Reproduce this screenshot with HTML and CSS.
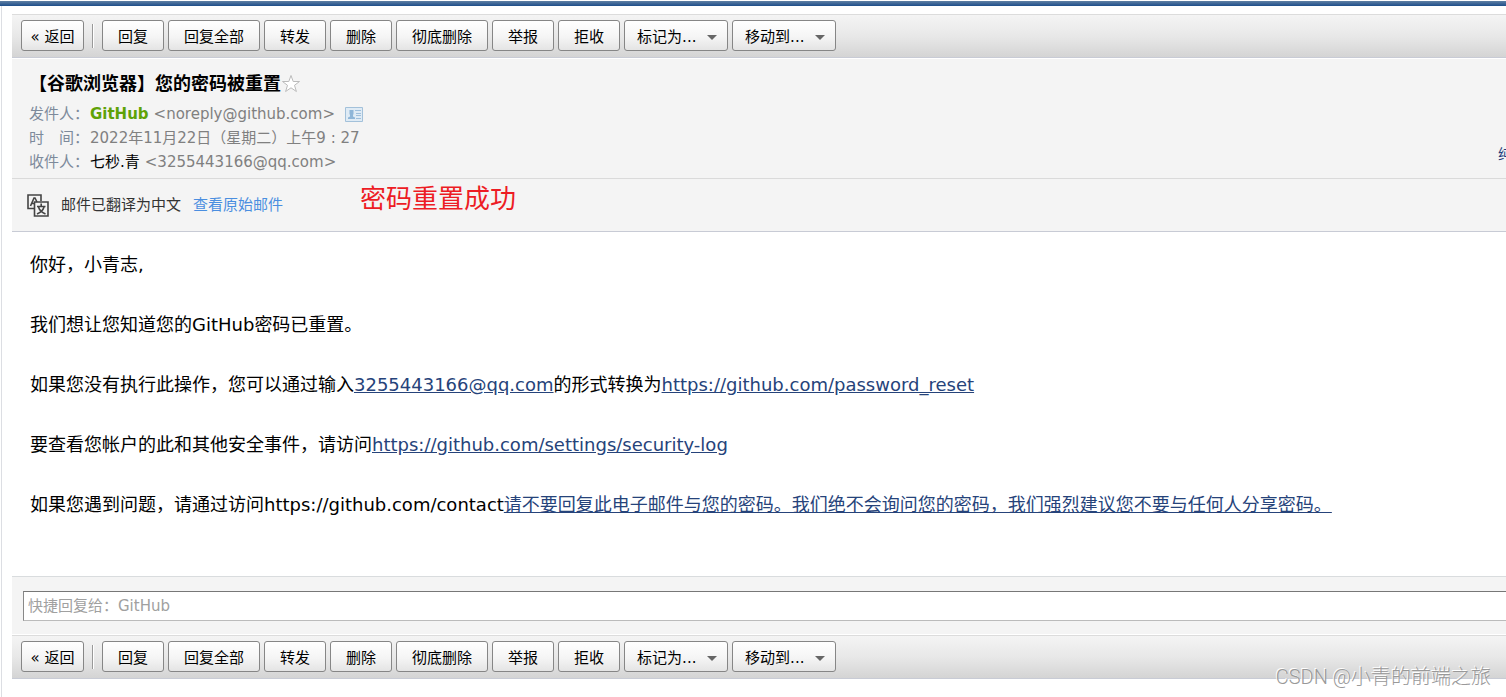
FILE: index.html
```
<!DOCTYPE html>
<html lang="zh-CN">
<head>
<meta charset="utf-8">
<title>您的密码被重置</title>
<link rel="stylesheet" href="styles.css">
</head>
<body>
<div class="topbar"></div>
<main class="mail">
  <nav class="toolbar" aria-label="邮件操作">
    <button class="btn back">« 返回</button><span class="sep"></span>
    <button class="btn">回复</button>
    <button class="btn">回复全部</button>
    <button class="btn">转发</button>
    <button class="btn">删除</button>
    <button class="btn">彻底删除</button>
    <button class="btn">举报</button>
    <button class="btn">拒收</button>
    <button class="btn menu">标记为...<span class="arrow"></span></button>
    <button class="btn menu">移动到...<span class="arrow"></span></button>
  </nav>

  <header class="head">
    <div class="info">
      <h1 class="subject">【谷歌浏览器】您的密码被重置<svg class="star" viewBox="0 0 20 20"><path d="M10 1.500l2.200 6h6.300l-5 3.800 1.900 6.200L10 13.800l-5.400 3.700 1.900-6.200-5-3.800h6.300z"/></svg></h1>
      <div class="row"><span class="label">发件人：</span><b class="sender">GitHub</b><span class="addr">&lt;noreply@github.com&gt;</span><svg class="card" viewBox="0 0 18 15"><path fill="#dfebf5" stroke="#a3c1da" d="M.5.5h17v14H.5z"/><path fill="#8fb6d8" d="M4.500 3h4v4L8 8v1.500l2 1V12H3v-1.500l2-1V8l-.5-1z"/><path stroke="#9fbfdc" d="M10 3.500h6M11 6.500h5M11 8.500h5M11 11.500h5"/></svg></div>
      <div class="row"><span class="label">时　间：</span><span>2022年11月22日（星期二）上午9 : 27</span></div>
      <div class="row"><span class="label">收件人：</span><span class="me">七秒.青</span><span class="addr">&lt;3255443166@qq.com&gt;</span></div>
    </div>
    <a class="plain" href="#">纯</a>
  </header>

  <section class="translate">
    <svg class="lang" viewBox="0 0 22 23"><g fill="none" stroke="#444" stroke-width="1.600"><path d="M7 14.500H1V1h13v6"/><path d="M7.500 8H21v14H7.500z"/><path d="M3.500 12L7 4h1l2 4M5 9.500h2"/><path d="M14.200 9.500v2.500M10 12.500h8.500M11.500 13c1 3.500 3.500 5.500 7 7M17 13c-1 3.500-3.500 5.500-7 7"/></g></svg>
    <span>邮件已翻译为中文</span>
    <a class="original" href="#">查看原始邮件</a>
    <span class="note">密码重置成功</span>
  </section>

  <article class="content">
    <p>你好，小青志,</p>
    <p>我们想让您知道您的GitHub密码已重置。</p>
    <p>如果您没有执行此操作，您可以通过输入<a href="#">3255443166@qq.com</a>的形式转换为<a href="#">https://github.com/password_reset</a></p>
    <p>要查看您帐户的此和其他安全事件，请访问<a href="#">https://github.com/settings/security-log</a></p>
    <p>如果您遇到问题，请通过访问https://github.com/contact<a href="#">请不要回复此电子邮件与您的密码。我们绝不会询问您的密码，我们强烈建议您不要与任何人分享密码。</a></p>
  </article>

  <div class="quick"><input class="reply" type="text" aria-label="快捷回复" placeholder="快捷回复给：GitHub"></div>

  <nav class="toolbar" aria-label="邮件操作">
    <button class="btn back">« 返回</button><span class="sep"></span>
    <button class="btn">回复</button>
    <button class="btn">回复全部</button>
    <button class="btn">转发</button>
    <button class="btn">删除</button>
    <button class="btn">彻底删除</button>
    <button class="btn">举报</button>
    <button class="btn">拒收</button>
    <button class="btn menu">标记为...<span class="arrow"></span></button>
    <button class="btn menu">移动到...<span class="arrow"></span></button>
  </nav>
</main>
<div class="watermark">CSDN @小青的前端之旅</div>
</body>
</html>
```
FILE: styles.css
```
* { box-sizing: border-box; }
body {
  margin: 0;
  padding-top: 1px;
  min-height: 100vh;
  display: flex;
  flex-direction: column;
  position: relative;
  overflow: hidden;
  background: #fff;
  color: #000;
  font: 15px/24px "DejaVu Sans", "Noto Sans CJK SC", sans-serif;
}
.topbar {
  height: 5px;
  background: linear-gradient(#5f7fa3, #1e4e8a);
}
.mail {
  flex: 1;
  margin-left: 1px;
  padding: 8px 0 18px 10px;
  border-left: 1px solid #dcdee3;
}
.toolbar {
  display: flex;
  align-items: flex-start;
  gap: 4px;
  height: 44px;
  padding: 5px 9px;
  border-top: 1px solid #dcdcdc;
  border-bottom: 1px solid #c8cbd5;
  background: linear-gradient(#f4f4f4, #e8e8e8 50%, #d4d4d4);
}
.btn {
  height: 31px;
  padding: 3px 15px 0;
  border: 1px solid #868686;
  border-radius: 3px;
  background: linear-gradient(#fff, #f5f5f5 55%, #e4e4e4);
  color: #000;
  font: 15px/24px "DejaVu Sans", "Noto Sans CJK SC", sans-serif;
  white-space: nowrap;
}
.back {
  width: 63px;
  padding: 3px 0 0;
}
.sep {
  width: 2px;
  height: 24px;
  margin: 4px 4px 0;
  border-left: 1px solid #999;
  border-right: 1px solid #fff;
}
.menu {
  display: flex;
  align-items: center;
  justify-content: space-between;
  width: 104px;
  padding: 3px 10px 0 12px;
}
.arrow {
  border: 5px solid transparent;
  border-top-color: #666;
  border-bottom: 0;
}
.head {
  display: flex;
  align-items: flex-end;
  justify-content: space-between;
  margin-top: 1px;
  padding: 11px 0 4px 17px;
  border-bottom: 1px solid #dadada;
  background: #f4f4f4;
  color: #808080;
}
.subject {
  display: flex;
  align-items: center;
  margin: 0;
  padding-bottom: 4px;
  height: 32px;
  color: #000;
  font-size: 18px;
  line-height: 28px;
}
.star {
  width: 20px;
  height: 20px;
  fill: #fff;
  stroke: #bbb;
}
.row { display: flex; align-items: center; }
.label { width: 61px; white-space: nowrap; color: #7d8a9b; }
.sender { color: #5fa207; }
.addr { margin-left: 5px; }
.card { width: 18px; height: 15px; margin-left: 10px; }
.me { color: #000; }
.plain {
  width: 8px;
  overflow: hidden;
  margin-bottom: 8px;
  color: #1e3c7b;
  font-size: 14px;
  text-decoration: none;
  white-space: nowrap;
}
.translate {
  position: relative;
  display: flex;
  align-items: center;
  gap: 12px;
  height: 53px;
  padding-left: 15px;
  border-bottom: 1px solid #c8cbd5;
  background: #f4f4f4;
  color: #333;
}
.lang { width: 22px; height: 23px; }
.original { color: #4a8ee0; text-decoration: none; }
.note {
  position: absolute;
  left: 348px;
  top: 4px;
  color: #ed1c24;
  font-size: 26px;
  line-height: 32px;
}
.content {
  padding: 18px 18px 56px;
  font-size: 18px;
  line-height: 30px;
}
.content p { margin: 0 0 30px; }
.content p:last-child { margin: 0; }
.content a { color: #26437a; }
.quick {
  padding: 14px 0 13px 11px;
  border-top: 1px solid #d9dcde;
  border-bottom: 1px solid #fff;
  background: #f4f4f4;
}
.reply {
  display: block;
  width: 100%;
  height: 30px;
  padding: 0 4px;
  border: 1px solid #bbb;
  border-right: 0;
  border-top-color: #777;
  border-left-color: #888;
  background: #fff;
  font: 15px/24px "DejaVu Sans", "Noto Sans CJK SC", sans-serif;
}
.reply::placeholder { color: #a0a0a0; opacity: 1; }
.watermark {
  position: absolute;
  right: 15px;
  bottom: 6px;
  color: #999;
  font: 20px/28px Roboto, "Noto Sans CJK SC", sans-serif;
  font-weight: 300;
  text-shadow: -1px -1px 0 #fff;
}
```
